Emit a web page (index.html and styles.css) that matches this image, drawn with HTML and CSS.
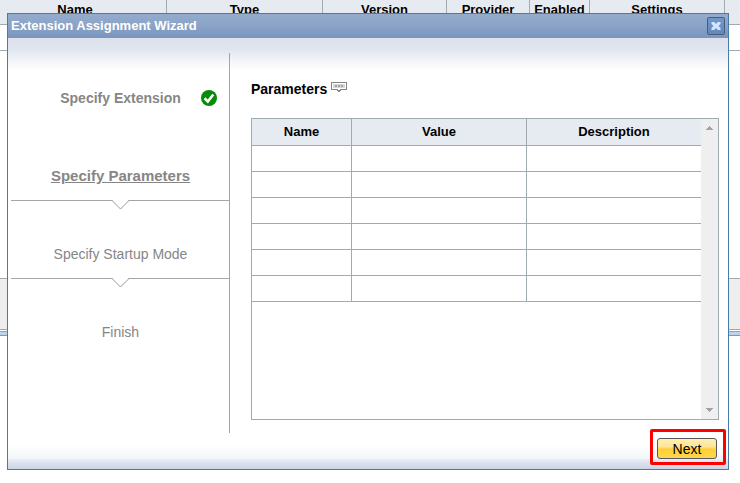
FILE: index.html
```
<!DOCTYPE html>
<html lang="en">
<head>
<meta charset="utf-8">
<title>Extension Assignment Wizard</title>
<link rel="stylesheet" href="styles.css">
</head>
<body>
<div class="page" aria-hidden="true">
  <table class="extensions">
    <colgroup><col class="c-name"><col class="c-type"><col class="c-version"><col class="c-provider"><col class="c-enabled"><col class="c-settings"><col></colgroup>
    <thead><tr><th><span class="first">Name</span></th><th>Type</th><th>Version</th><th>Provider</th><th>Enabled</th><th>Settings</th><th></th></tr></thead>
    <tbody><tr><td colspan="7"></td></tr></tbody>
  </table>
  <div class="page-footer"></div>
  <div class="page-bar"></div>
</div>

<section class="dialog" role="dialog" aria-labelledby="dialog-title">
  <header class="titlebar">
    <h1 id="dialog-title">Extension Assignment Wizard</h1>
    <button class="close" type="button" aria-label="Close">
      <svg width="10" height="10" viewBox="0 0 10 10"><path d="M.5 1h2.700L5 3l1.800-2h2.700v2L7.500 5l2 2v2H6.800L5 7 3.200 9H.5V7l2-2-2-2z" fill="#d3e5ff"/></svg>
    </button>
  </header>
  <div class="content">
    <ol class="steps">
      <li class="step done"><span class="label">Specify Extension</span>
        <svg class="check" width="16" height="16" viewBox="0 0 16 16"><circle cx="8" cy="8" r="8" fill="#058b05"/><path d="M3.500 8.300l3.300 3.200L12.300 4.500" fill="none" stroke="#fff" stroke-width="2.600"/></svg>
      </li>
      <li class="step current"><span class="label">Specify Parameters</span>
        <svg class="notch" width="20" height="10" viewBox="0 0 20 10"><path d="M1 0h17L9.500 9z" fill="#fff"/><path d="M.5 0l9 9 9-9" fill="none" stroke="#96999c"/></svg>
      </li>
      <li class="step"><span class="label">Specify Startup Mode</span>
        <svg class="notch" width="20" height="10" viewBox="0 0 20 10"><path d="M1 0h17L9.500 9z" fill="#fff"/><path d="M.5 0l9 9 9-9" fill="none" stroke="#96999c"/></svg>
      </li>
      <li class="step"><span class="label">Finish</span></li>
    </ol>
    <main class="panel">
      <h2>Parameters
        <svg width="16" height="10" viewBox="0 0 16 10" shape-rendering="crispEdges"><path d="M0 0h16v8h-6v1H9v1H7V9H6V8H0z" fill="#858585"/><path d="M1 1h14v6H9v1H7V7H1z" fill="#fff"/><path d="M2 2h12v4H2z" fill="#d8d8d8"/><path d="M4 3h2v2H4zM7 3h2v2H7zM10 3h2v2h-2z" fill="#a0a0a0"/></svg>
      </h2>
      <div class="grid">
        <table class="parameters">
          <colgroup><col class="p-name"><col class="p-value"><col></colgroup>
          <thead><tr><th>Name</th><th>Value</th><th>Description</th></tr></thead>
          <tbody>
            <tr><td></td><td></td><td></td></tr>
            <tr><td></td><td></td><td></td></tr>
            <tr><td></td><td></td><td></td></tr>
            <tr><td></td><td></td><td></td></tr>
            <tr><td></td><td></td><td></td></tr>
            <tr><td></td><td></td><td></td></tr>
          </tbody>
        </table>
        <div class="scrollbar">
          <svg width="7" height="4" viewBox="0 0 7 4" shape-rendering="crispEdges"><path d="M3 0h1v1h1v1h1v1h1v1H0V3h1V2h1V1h1z" fill="#a3a3a3"/></svg>
          <svg width="7" height="4" viewBox="0 0 7 4" shape-rendering="crispEdges"><path d="M0 0h7v1H6v1H5v1H4v1H3V3H2V2H1V1H0z" fill="#a3a3a3"/></svg>
        </div>
      </div>
    </main>
  </div>
  <footer class="actions"><div class="highlight"><button class="next" type="button">Next</button></div></footer>
</section>
</body>
</html>
```
FILE: styles.css
```
* { box-sizing: border-box; }

body {
  margin: 0;
  background: #fff;
  color: #000;
  font: 13px/16px "Liberation Sans", Arial, sans-serif;
  overflow: hidden;
}

h1, h2, ol { margin: 0; padding: 0; }
svg { display: block; }

table {
  width: 100%;
  border-collapse: separate;
  border-spacing: 0;
  table-layout: fixed;
}

th {
  background: #e6ebf2;
  font-weight: bold;
  text-align: center;
}

th, td {
  border-right: 1px solid #a0abb0;
  border-bottom: 1px solid #a0abb0;
}

th:last-child, td:last-child { border-right: 0; }

/* Page behind the dialog */
.extensions th { height: 25px; padding: 0; vertical-align: top; line-height: 19px; }
.extensions .first { padding-right: 16px; }
.extensions td { height: 26px; padding: 0; }
.c-name { width: 167px; }
.c-type { width: 156px; }
.c-version { width: 124px; }
.c-provider { width: 83px; }
.c-enabled { width: 60px; }
.c-settings { width: 135px; }

.page-footer {
  height: 52px;
  margin-top: 227px;
  border-top: 1px solid #a0abb0;
  border-bottom: 1px solid #a0abb0;
  background: #eee;
}

.page-bar {
  height: 5px;
  margin-top: 1px;
  border-top: 1px solid #88a6c8;
  border-bottom: 1px solid #7f98b4;
  background: #bdd3ec;
}

/* Dialog */
.dialog {
  position: absolute;
  top: 13px;
  left: 7px;
  right: 11px;
  border: 1px solid #4a7ba6;
  background:
    linear-gradient(#dde1ed, #e0e5ef 35%, #f4f6fa 75%, #fff) 0 24px / 100% 32px no-repeat,
    linear-gradient(#fff, #f3f6f9 55%, #e4e8f1 65%, #ccd4e4) bottom / 100% 24px no-repeat,
    #fff;
}

.titlebar {
  display: flex;
  align-items: center;
  justify-content: space-between;
  height: 24px;
  padding: 0 3px;
  background: linear-gradient(#94abcd, #8aa3c7 50%, #7895bd);
}

.titlebar h1 { color: #fff; font-size: 13px; line-height: 16px; }

.close {
  display: grid;
  place-items: center;
  width: 18px;
  height: 18px;
  padding: 0;
  border: 1px solid #465d7b;
  border-radius: 2px;
  background: linear-gradient(#7198ca, #6588b9);
}

.content { display: flex; padding: 15px 9px 0 3px; }

.steps {
  flex: none;
  width: 219px;
  height: 380px;
  border-right: 1px solid #a0a6ad;
  list-style: none;
}

.step {
  position: relative;
  display: flex;
  align-items: flex-end;
  justify-content: center;
  height: 78px;
  padding: 0 0 15px 1px;
  border-bottom: 1px solid #a3a6aa;
  color: #868686;
  font-size: 14px;
  line-height: 18px;
}

.step.done { height: 70px; border-color: transparent; font-weight: bold; }
.step.current { font-size: 15px; font-weight: bold; text-decoration: underline; }
.step:last-child { border-color: transparent; }
.check { position: absolute; right: 12px; bottom: 16px; }
.notch { position: absolute; top: 100%; left: 100px; }

.panel { flex: 1; padding: 27px 0 0 21px; }

.panel h2 {
  display: flex;
  gap: 4px;
  margin-bottom: 20px;
  font-size: 14px;
  line-height: 18px;
}

.panel h2 svg { margin-top: 2px; }

.grid {
  display: flex;
  align-items: stretch;
  height: 302px;
  border: 1px solid #a0abb0;
}

.parameters { flex: 1; align-self: flex-start; }
.parameters th { height: 27px; padding: 0; }
.parameters td { height: 26px; padding: 0; }
.p-name { width: 100px; }
.p-value { width: 175px; }

.scrollbar {
  display: flex;
  flex: none;
  flex-direction: column;
  align-items: center;
  justify-content: space-between;
  width: 17px;
  padding: 7px 0;
  background: #efefef;
}

.actions { display: flex; justify-content: flex-end; margin-top: -4px; padding: 0 2px 4px; }

.highlight {
  padding: 6px 6px 3px 4px;
  border: 3px solid #f00;
  border-radius: 2px;
}

.next {
  display: block;
  width: 60px;
  height: 21px;
  padding: 0;
  border: 1px solid #58585c;
  border-radius: 3px;
  background: linear-gradient(#fff0b5, #ffe595 40%, #ffd034 55%, #ffd650);
  color: #000;
  font: 14px/18px "Liberation Sans", Arial, sans-serif;
}
```
